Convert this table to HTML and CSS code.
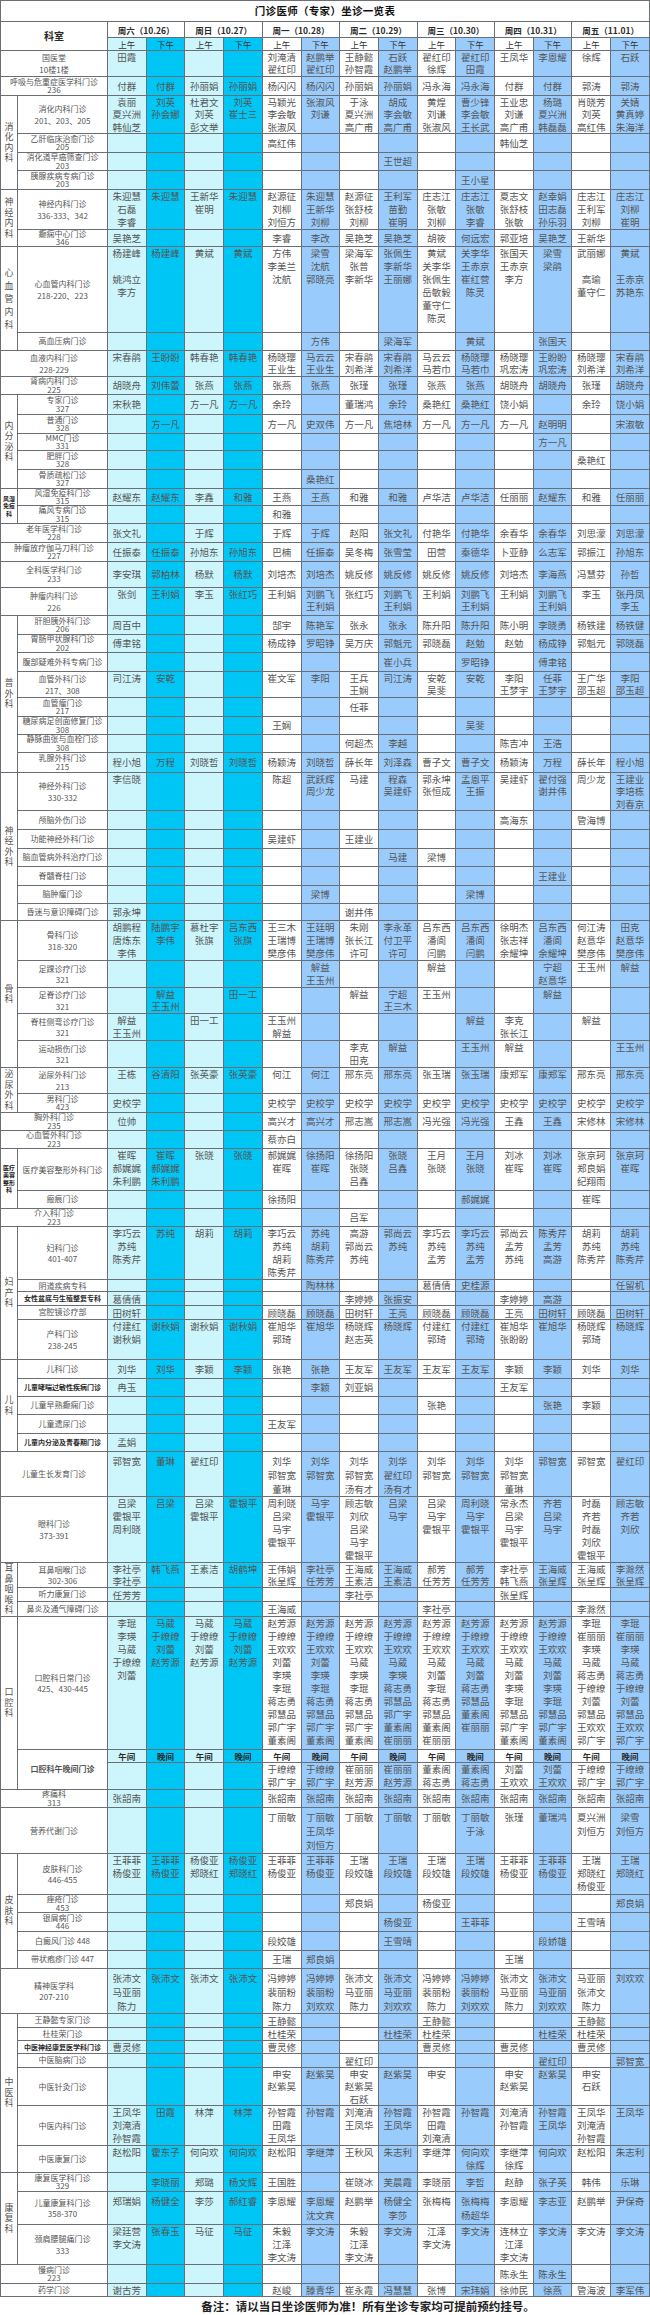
FILE: index.html
```html
<!DOCTYPE html>
<html lang="zh-CN">
<head>
<meta charset="utf-8">
<title>门诊医师（专家）坐诊一览表</title>
<link rel="stylesheet" href="styles.css">
</head>
<body>
<table class="sch">
<colgroup><col class="cg"><col class="cc"><col class="wa"><col class="wp"><col class="wa"><col class="wp"><col class="da"><col class="dp"><col class="da"><col class="dp"><col class="da"><col class="dp"><col class="da"><col class="dp"><col class="da"><col class="dp"></colgroup>
<tbody>
<tr class="h21"><td class="title" colspan="16">门诊医师（专家）坐诊一览表</td></tr>
<tr class="h16 dh"><td class="ks" colspan="2" rowspan="2">科室</td><td colspan="2">周六（10.26）</td><td colspan="2">周日（10.27）</td><td colspan="2">周一（10.28）</td><td colspan="2">周二（10.29）</td><td colspan="2">周三（10.30）</td><td colspan="2">周四（10.31）</td><td colspan="2">周五（11.01）</td></tr>
<tr class="h13 ap"><td>上午</td><td>下午</td><td>上午</td><td>下午</td><td>上午</td><td>下午</td><td>上午</td><td>下午</td><td>上午</td><td>下午</td><td>上午</td><td>下午</td><td>上午</td><td>下午</td></tr>

<tr class="h26 ml"><td class="cn" colspan="2"><div>国医堂<br>10楼1楼</div></td><td>田霞</td><td></td><td></td><td></td><td>刘淹清<br>翟红印</td><td>赵鹏举<br>翟红印</td><td>王静懿<br>孙智霞</td><td>石跃<br>赵鹏举</td><td>翟红印<br>徐辉</td><td>翟红印<br>田霞</td><td>王凤华</td><td>李恩耀</td><td>徐辉</td><td>石跃</td></tr>
<tr class="h19"><td class="cn" colspan="2"><div>呼吸与危重症医学科门诊<br>236</div></td><td>付群</td><td>付群</td><td>孙丽娟</td><td>孙丽娟</td><td>杨闪闪</td><td>杨闪闪</td><td>孙丽娟</td><td>孙丽娟</td><td>冯永海</td><td>冯永海</td><td>付群</td><td>付群</td><td>郭涛</td><td>郭涛</td></tr>

<tr class="h38 ml"><td class="g" rowspan="4">消化内科</td><td class="cn"><div>消化内科门诊<br>201、203、205</div></td><td>袁丽<br>夏兴洲<br>韩仙芝</td><td>刘英<br>孙会娜</td><td>杜君文<br>刘英<br>彭文举</td><td>刘英<br>崔士三</td><td>马颖光<br>李会敏<br>张淑风</td><td>张淑风<br>刘谦</td><td>于泳<br>夏兴洲<br>高广甫</td><td>胡成<br>李会敏<br>高广甫</td><td>黄煌<br>刘谦<br>张淑风</td><td>曹少锋<br>李会敏<br>王长武</td><td>王业忠<br>刘谦<br>高广甫</td><td>杨璐<br>夏兴洲<br>韩磊磊</td><td>肖晓芳<br>刘英<br>高红伟</td><td>关婧<br>黄真婷<br>朱海洋</td></tr>
<tr class="h19"><td class="cn"><div>乙肝临床治愈门诊<br>205</div></td><td></td><td></td><td></td><td></td><td>高红伟</td><td></td><td></td><td></td><td></td><td></td><td>韩仙芝</td><td></td><td></td><td></td></tr>
<tr class="h18"><td class="cn"><div>消化道早癌筛查门诊<br>203</div></td><td></td><td></td><td></td><td></td><td></td><td></td><td></td><td>王世超</td><td></td><td></td><td></td><td></td><td></td><td></td></tr>
<tr class="h19"><td class="cn"><div>胰腺疾病专病门诊<br>203</div></td><td></td><td></td><td></td><td></td><td></td><td></td><td></td><td></td><td></td><td>王小星</td><td></td><td></td><td></td><td></td></tr>

<tr class="h40 ml l13"><td class="g" rowspan="2">神经内科</td><td class="cn"><div>神经内科门诊<br>336-333、342</div></td><td>朱迎慧<br>石磊<br>李睿</td><td>朱迎慧</td><td>王新华<br>崔明</td><td>朱迎慧</td><td>赵源征<br>刘柳<br>刘恒方</td><td>朱迎慧<br>王新华<br>刘柳</td><td>赵源征<br>张舒枝<br>刘柳</td><td>王利军<br>苗勤<br>崔明</td><td>庄志江<br>张敏<br>刘柳</td><td>庄志江<br>张敏<br>李睿</td><td>夏志文<br>张舒枝<br>张敏</td><td>赵幸娟<br>田志磊<br>孙乐羽</td><td>庄志江<br>王利军<br>刘柳</td><td>庄志江<br>刘柳<br>崔明</td></tr>
<tr class="h17"><td class="cn"><div>癫痫中心门诊<br>346</div></td><td>吴艳芝</td><td></td><td></td><td></td><td>李睿</td><td>李改</td><td>吴艳芝</td><td>吴艳芝</td><td>胡筱</td><td>何远宏</td><td>郭亚培</td><td>吴艳芝</td><td>王新华</td><td></td></tr>

<tr class="h86 ml l13"><td class="g gl" rowspan="2">心血管内科</td><td class="cn"><div>心血管内科门诊<br>218-220、223</div></td><td>杨建峰<br><br>姚鸿立<br>李方</td><td>杨建峰</td><td>黄斌</td><td>黄斌</td><td>方伟<br>李美兰<br>沈航</td><td>梁雪<br>沈航<br>郭晓亮</td><td>梁海军<br>张普<br>李新华</td><td>张佩生<br>李新华<br>王丽娜</td><td>黄斌<br>关李华<br>张佩生<br>岳敏毅<br>董守仁<br>陈灵</td><td>关李华<br>王赤京<br>崔红营<br>陈灵</td><td>张国天<br>王赤京<br>李方</td><td>梁雪<br>梁鹃</td><td>武丽娜<br><br>高瑜<br>董守仁</td><td>黄斌<br><br>王赤京<br>苏艳东</td></tr>
<tr class="h18"><td class="cn"><div>高血压病门诊</div></td><td></td><td></td><td></td><td></td><td></td><td>方伟</td><td></td><td>梁海军</td><td></td><td>黄斌</td><td></td><td>张国天</td><td></td><td></td></tr>

<tr class="h26 ml"><td class="cn" colspan="2"><div>血液内科门诊<br>228-229</div></td><td>宋春鹃</td><td>王盼盼</td><td>韩春艳</td><td>韩春艳</td><td>杨晓璎<br>王业生</td><td>马云云<br>王业生</td><td>宋春鹃<br>刘希洋</td><td>宋春鹃<br>刘希洋</td><td>马云云<br>马若巾</td><td>杨晓璎<br>马若巾</td><td>杨晓璎<br>巩宏涛</td><td>王盼盼<br>巩宏涛</td><td>杨晓璎<br>刘希洋</td><td>宋春鹃<br>刘希洋</td></tr>
<tr class="h18"><td class="cn" colspan="2"><div>肾病内科门诊<br>225</div></td><td>胡晓舟</td><td>刘伟蕾</td><td>张燕</td><td>张燕</td><td>张燕</td><td>张燕</td><td>张瑾</td><td>张瑾</td><td>张燕</td><td>张燕</td><td>胡晓舟</td><td>胡晓舟</td><td>张瑾</td><td>胡晓舟</td></tr>

<tr class="h20"><td class="g" rowspan="5">内分泌科</td><td class="cn"><div>专家门诊<br>327</div></td><td>宋秋艳</td><td></td><td>方一凡</td><td>方一凡</td><td>余玲</td><td></td><td>董瑞鸿</td><td>余玲</td><td>桑艳红</td><td>桑艳红</td><td>饶小娟</td><td></td><td>余玲</td><td>饶小娟</td></tr>
<tr class="h19"><td class="cn"><div>普通门诊<br>328</div></td><td></td><td>方一凡</td><td></td><td></td><td>方一凡</td><td>史双伟</td><td>方一凡</td><td>焦培林</td><td>方一凡</td><td>方一凡</td><td>方一凡</td><td>赵明明</td><td></td><td>宋淑敏</td></tr>
<tr class="h17"><td class="cn"><div>MMC门诊<br>331</div></td><td></td><td></td><td></td><td></td><td></td><td></td><td></td><td></td><td></td><td></td><td></td><td>方一凡</td><td></td><td></td></tr>
<tr class="h19"><td class="cn"><div>肥胖门诊<br>328</div></td><td></td><td></td><td></td><td></td><td></td><td></td><td></td><td></td><td></td><td></td><td></td><td></td><td>桑艳红</td><td></td></tr>
<tr class="h19"><td class="cn"><div>骨质疏松门诊<br>327</div></td><td></td><td></td><td></td><td></td><td></td><td>桑艳红</td><td></td><td></td><td></td><td></td><td></td><td></td><td></td><td></td></tr>

<tr class="h17"><td class="g gs" rowspan="2">风湿免疫科</td><td class="cn"><div>风湿免疫科门诊<br>315</div></td><td>赵耀东</td><td>赵耀东</td><td>李鑫</td><td>和雅</td><td>王燕</td><td>王燕</td><td>和雅</td><td>和雅</td><td>卢华洁</td><td>卢华洁</td><td>任丽丽</td><td>赵耀东</td><td>和雅</td><td>任丽丽</td></tr>
<tr class="h18"><td class="cn"><div>痛风专病门诊<br>315</div></td><td></td><td></td><td></td><td></td><td>和雅</td><td></td><td></td><td></td><td></td><td></td><td></td><td></td><td></td><td></td></tr>

<tr class="h19"><td class="cn" colspan="2"><div>老年医学科门诊<br>228</div></td><td>张文礼</td><td></td><td>于辉</td><td></td><td>于辉</td><td>于辉</td><td>赵阳</td><td>张文礼</td><td>付艳华</td><td>付艳华</td><td>余春华</td><td>余春华</td><td>刘思濛</td><td>刘思濛</td></tr>
<tr class="h19"><td class="cn" colspan="2"><div>肿瘤放疗伽马刀科门诊<br>227</div></td><td>任振泰</td><td>任振泰</td><td>孙旭东</td><td>孙旭东</td><td>巴楠</td><td>任振泰</td><td>吴冬梅</td><td>张雪莹</td><td>田营</td><td>秦德华</td><td>卜亚静</td><td>么志军</td><td>郭振江</td><td>孙旭东</td></tr>
<tr class="h26"><td class="cn" colspan="2"><div>全科医学科门诊<br>233</div></td><td>李安琪</td><td>郭柏林</td><td>杨默</td><td>杨默</td><td>刘培杰</td><td>刘培杰</td><td>姚反修</td><td>姚反修</td><td>姚反修</td><td>姚反修</td><td>刘培杰</td><td>李海燕</td><td>冯慧芬</td><td>孙哲</td></tr>
<tr class="h28 ml"><td class="cn" colspan="2"><div>肿瘤内科门诊<br>226</div></td><td>张剑</td><td>王利娟</td><td>李玉</td><td>张红巧</td><td>王利娟</td><td>刘鹏飞<br>王利娟</td><td>张红巧</td><td>刘鹏飞<br>王利娟</td><td>王利娟</td><td>刘鹏飞<br>王利娟</td><td>王利娟</td><td>刘鹏飞<br>王利娟</td><td>李玉</td><td>张丹凤<br>李玉</td></tr>

<tr class="h19"><td class="g" rowspan="8">普外科</td><td class="cn"><div>肝胆胰外科门诊<br>206</div></td><td>周百中</td><td></td><td></td><td></td><td>郜宇</td><td>陈艳军</td><td>张永</td><td>张永</td><td>陈升阳</td><td>陈升阳</td><td>陈小明</td><td>李晓勇</td><td>杨铁建</td><td>杨铁健</td></tr>
<tr class="h18"><td class="cn"><div>胃肠甲状腺科门诊<br>202</div></td><td>傅聿铭</td><td></td><td></td><td></td><td>杨成铮</td><td>罗昭铮</td><td>吴万庆</td><td>郭魁元</td><td>郭晓磊</td><td>赵勉</td><td>赵勉</td><td>杨成铮</td><td>郭魁元</td><td>郭晓磊</td></tr>
<tr class="h19"><td class="cn"><div>腹部疑难外科专病门诊</div></td><td></td><td></td><td></td><td></td><td></td><td></td><td></td><td>崔小兵</td><td></td><td>罗昭铮</td><td></td><td>傅聿铭</td><td></td><td></td></tr>
<tr class="h26 ml"><td class="cn"><div>血管外科门诊<br>217、308</div></td><td>司江涛</td><td>安乾</td><td></td><td></td><td>崔文军</td><td>李阳</td><td>王兵<br>王娴</td><td>司江涛</td><td>安乾<br>吴斐</td><td>安乾</td><td>李阳<br>王梦宇</td><td>任菲<br>王梦宇</td><td>王广华<br>邵玉超</td><td>李阳<br>邵玉超</td></tr>
<tr class="h19"><td class="cn"><div>血管瘤门诊<br>217</div></td><td></td><td></td><td></td><td></td><td></td><td></td><td>任菲</td><td></td><td></td><td></td><td></td><td></td><td></td><td></td></tr>
<tr class="h18"><td class="cn"><div>糖尿病足创面修复门诊<br>308</div></td><td></td><td></td><td></td><td></td><td>王娴</td><td></td><td></td><td></td><td></td><td>吴斐</td><td></td><td></td><td></td><td></td></tr>
<tr class="h18"><td class="cn"><div>静脉曲张与血栓门诊<br>308</div></td><td></td><td></td><td></td><td></td><td></td><td></td><td>何超杰</td><td>李越</td><td></td><td></td><td>陈吉冲</td><td>王浩</td><td></td><td></td></tr>
<tr class="h20"><td class="cn"><div>乳腺外科门诊<br>215</div></td><td>程小旭</td><td>万程</td><td>刘晓哲</td><td>刘晓哲</td><td>杨颖涛</td><td>刘晓哲</td><td>薛长年</td><td>刘泽森</td><td>曹子文</td><td>曹子文</td><td>杨颖涛</td><td>万程</td><td>薛长年</td><td>程小旭</td></tr>

<tr class="h38 ml"><td class="g" rowspan="7">神经外科</td><td class="cn"><div>神经外科门诊<br>330-332</div></td><td>李信晓</td><td></td><td></td><td></td><td>陈超</td><td>武跃辉<br>周少龙</td><td>马建</td><td>程森<br>吴建虾</td><td>郭永坤<br>张恒成</td><td>孟恩平<br>王振</td><td>吴建虾</td><td>翟付强<br>谢井伟</td><td>周少龙</td><td>王建业<br>李培栋<br>刘春京</td></tr>
<tr class="h19"><td class="cn"><div>颅脑外伤门诊</div></td><td></td><td></td><td></td><td></td><td></td><td></td><td></td><td></td><td></td><td></td><td>高海东</td><td></td><td>管海博</td><td></td></tr>
<tr class="h19"><td class="cn"><div>功能神经外科门诊</div></td><td></td><td></td><td></td><td></td><td>吴建虾</td><td></td><td>王建业</td><td></td><td></td><td></td><td></td><td></td><td></td><td></td></tr>
<tr class="h18"><td class="cn"><div>脑血管病外科治疗门诊</div></td><td></td><td></td><td></td><td></td><td></td><td></td><td></td><td>马建</td><td>梁博</td><td></td><td></td><td></td><td></td><td></td></tr>
<tr class="h19"><td class="cn"><div>脊髓脊柱门诊</div></td><td></td><td></td><td></td><td></td><td></td><td></td><td></td><td></td><td></td><td></td><td></td><td>王建业</td><td></td><td></td></tr>
<tr class="h18"><td class="cn"><div>脑肿瘤门诊</div></td><td></td><td></td><td></td><td></td><td></td><td>梁博</td><td></td><td></td><td></td><td>梁博</td><td></td><td></td><td></td><td></td></tr>
<tr class="h17"><td class="cn"><div>昏迷与意识障碍门诊</div></td><td>郭永坤</td><td></td><td></td><td></td><td></td><td></td><td>谢井伟</td><td></td><td></td><td></td><td></td><td></td><td></td><td></td></tr>

<tr class="h40 ml l13"><td class="g" rowspan="5">骨科</td><td class="cn"><div>骨科门诊<br>318-320</div></td><td>胡鹏程<br>唐炼东<br>李伟</td><td>陆鹏宇<br>李伟</td><td>慕杜宇<br>张旗</td><td>吕东西<br>张旗</td><td>王三木<br>王瑞博<br>樊彦伟</td><td>王廷明<br>王瑞博<br>樊彦伟</td><td>朱刚<br>张长江<br>许可</td><td>李永革<br>付卫平<br>许可</td><td>吕东西<br>潘阆<br>闫鹏</td><td>吕东西<br>潘阆<br>闫鹏</td><td>徐明杰<br>张志祥<br>余耀坤</td><td>吕东西<br>潘阆<br>余耀坤</td><td>何江涛<br>赵意华<br>樊彦伟</td><td>田克<br>赵意华<br>樊彦伟</td></tr>
<tr class="h27 ml l13"><td class="cn"><div>足踝诊疗门诊<br>321</div></td><td></td><td></td><td></td><td></td><td></td><td>解益<br>王玉州</td><td></td><td></td><td>解益</td><td></td><td></td><td>宁超<br>赵意华</td><td>王玉州</td><td>解益</td></tr>
<tr class="h26 ml"><td class="cn"><div>足脊诊疗门诊<br>321</div></td><td></td><td>解益<br>王玉州</td><td></td><td>田一工</td><td></td><td></td><td>解益</td><td>宁超<br>王三木</td><td>王玉州</td><td></td><td></td><td>解益</td><td></td><td></td></tr>
<tr class="h27 ml l13"><td class="cn"><div>脊柱侧弯诊疗门诊<br>321</div></td><td>解益<br>王玉州</td><td></td><td>田一工</td><td></td><td>王玉州<br>解益</td><td></td><td></td><td></td><td></td><td>解益</td><td>李克<br>张长江</td><td></td><td>解益</td><td></td></tr>
<tr class="h27 ml l13"><td class="cn"><div>运动损伤门诊<br>321</div></td><td></td><td></td><td></td><td></td><td></td><td></td><td>李克<br>田克</td><td>解益</td><td></td><td>王玉州</td><td>解益</td><td></td><td></td><td>王玉州</td></tr>

<tr class="h26 ml"><td class="g" rowspan="2">泌尿外科</td><td class="cn"><div>泌尿外科门诊<br>213</div></td><td>王栋</td><td>谷清阳</td><td>张英豪</td><td>张英豪</td><td>何江</td><td>何江</td><td>邢东亮</td><td>邢东亮</td><td>张玉瑞</td><td>张玉瑞</td><td>康郑军</td><td>康郑军</td><td>邢东亮</td><td>邢东亮</td></tr>
<tr class="h19"><td class="cn"><div>男科门诊<br>423</div></td><td>史校学</td><td></td><td></td><td></td><td>史校学</td><td>史校学</td><td>史校学</td><td>史校学</td><td>史校学</td><td>史校学</td><td>史校学</td><td>史校学</td><td>史校学</td><td>史校学</td></tr>

<tr class="h18"><td class="cn" colspan="2"><div>胸外科门诊<br>235</div></td><td>位帅</td><td></td><td></td><td></td><td>高兴才</td><td>高兴才</td><td>邢志嵩</td><td>邢志嵩</td><td>冯光强</td><td>冯光强</td><td>王鑫</td><td>王鑫</td><td>宋修林</td><td>宋修林</td></tr>
<tr class="h18"><td class="cn" colspan="2"><div>心血管外科门诊<br>223</div></td><td></td><td></td><td></td><td></td><td>蔡亦白</td><td></td><td></td><td></td><td></td><td></td><td></td><td></td><td></td><td></td></tr>

<tr class="h42 ml l13"><td class="g gs" rowspan="2">医疗美容整形科</td><td class="cn"><div>医疗美容整形外科门诊</div></td><td>崔晖<br>郝娓娓<br>朱利鹏</td><td>崔晖<br>郝娓娓<br>朱利鹏</td><td>张晓</td><td>张晓</td><td>郝娓娓<br>崔晖</td><td>徐扬阳<br>崔晖</td><td>徐扬阳<br>张晓<br>吕鑫</td><td>张晓<br>吕鑫</td><td>王月<br>张晓</td><td>王月<br>张晓</td><td>刘冰<br>崔晖</td><td>刘冰<br>崔晖</td><td>张京珂<br>郑良娟<br>纪翔雨</td><td>张京珂<br>崔晖</td></tr>
<tr class="h18"><td class="cn"><div>瘢痕门诊</div></td><td></td><td></td><td></td><td></td><td>徐扬阳</td><td></td><td></td><td></td><td></td><td>郝娓娓</td><td></td><td></td><td>崔晖</td><td></td></tr>

<tr class="h18"><td class="cn" colspan="2"><div>介入科门诊<br>223</div></td><td></td><td></td><td></td><td></td><td></td><td></td><td>吕军</td><td></td><td></td><td></td><td></td><td></td><td></td><td></td></tr>

<tr class="h53 ml l13"><td class="g" rowspan="5">妇产科</td><td class="cn"><div>妇科门诊<br>401-407</div></td><td>李巧云<br>苏纯<br>陈秀芹</td><td>苏纯</td><td>胡莉</td><td>胡莉</td><td>李巧云<br>苏纯<br>胡莉<br>陈秀芹</td><td>苏纯<br>胡莉<br>陈秀芹</td><td>高游<br>郭尚云<br>苏纯</td><td>郭尚云<br>苏纯</td><td>李巧云<br>苏纯<br>孟芳</td><td>李巧云<br>苏纯<br>孟芳</td><td>郭尚云<br>孟芳<br>苏纯</td><td>陈秀芹<br>孟芳<br>高游</td><td>胡莉<br>苏纯<br>陈秀芹</td><td>胡莉<br>苏纯<br>陈秀芹</td></tr>
<tr class="h12"><td class="cn"><div>阴道疾病专科</div></td><td></td><td></td><td></td><td></td><td></td><td>陶林林</td><td></td><td></td><td>葛倩倩</td><td>史桂源</td><td></td><td></td><td></td><td>任留机</td></tr>
<tr class="h14"><td class="cn cb"><div>女性盆底与生殖整复专科</div></td><td>葛倩倩</td><td></td><td></td><td></td><td></td><td></td><td>李婷婷</td><td>张振安</td><td></td><td></td><td>李婷婷</td><td>高游</td><td></td><td></td></tr>
<tr class="h14"><td class="cn"><div>宫腔镜诊疗部</div></td><td>田树轩</td><td></td><td></td><td></td><td>顾晓磊</td><td>顾晓磊</td><td>田树轩</td><td>王亮</td><td>顾晓磊</td><td>顾晓磊</td><td>王亮</td><td>田树轩</td><td>顾晓磊</td><td>田树轩</td></tr>
<tr class="h40 ml l13"><td class="cn"><div>产科门诊<br>238-245</div></td><td>付建红<br>谢秋娟</td><td>谢秋娟</td><td>谢秋娟</td><td>谢秋娟</td><td>崔旭华<br>郭琦</td><td>崔旭华</td><td>杨晓辉<br>赵志英</td><td>杨晓辉</td><td>付建红<br>郭琦</td><td>付建红<br>郭琦</td><td>崔旭华<br>张盼盼</td><td>崔旭华</td><td>杨晓辉<br>郭琦</td><td>杨晓辉</td></tr>

<tr class="h19"><td class="g" rowspan="5">儿科</td><td class="cn"><div>儿科门诊</div></td><td>刘华</td><td>刘华</td><td>李颖</td><td>李颖</td><td>张艳</td><td>张艳</td><td>王友军</td><td>王友军</td><td>王友军</td><td>王友军</td><td>李颖</td><td>李颖</td><td>刘华</td><td>刘华</td></tr>
<tr class="h18"><td class="cn cb"><div>儿童哮喘过敏性疾病门诊</div></td><td>冉玉</td><td></td><td></td><td></td><td></td><td>李颖</td><td>刘亚娟</td><td></td><td></td><td></td><td>王友军</td><td></td><td></td><td></td></tr>
<tr class="h18"><td class="cn"><div>儿童早熟癫痫门诊</div></td><td></td><td></td><td></td><td></td><td></td><td></td><td></td><td></td><td>张艳</td><td></td><td></td><td>张艳</td><td>李颖</td><td></td></tr>
<tr class="h19"><td class="cn"><div>儿童遗尿门诊</div></td><td></td><td></td><td></td><td></td><td>王友军</td><td></td><td></td><td></td><td></td><td></td><td></td><td></td><td></td><td></td></tr>
<tr class="h18"><td class="cn cb"><div>儿童内分泌及青春期门诊</div></td><td>孟娟</td><td></td><td></td><td></td><td></td><td></td><td></td><td></td><td></td><td></td><td></td><td></td><td></td><td></td></tr>

<tr class="h45 ml l14"><td class="cn" colspan="2"><div>儿童生长发育门诊</div></td><td>郭智宽</td><td>董琳</td><td>翟红印</td><td></td><td>刘华<br>郭智宽<br>董琳</td><td>刘华<br>郭智宽</td><td>刘华<br>郭智宽<br>汤有才</td><td>刘华<br>翟红印<br>汤有才</td><td>刘华<br>郭智宽</td><td>刘华<br>郭智宽</td><td>刘华<br>郭智宽<br>董琳</td><td>郭智宽</td><td>郭智宽</td><td>翟红印</td></tr>
<tr class="h66 ml l13"><td class="cn" colspan="2"><div>眼科门诊<br>373-391</div></td><td>吕梁<br>霍银平<br>周利晓</td><td>吕梁</td><td>吕梁<br>霍银平</td><td>霍银平</td><td>周利晓<br>吕梁<br>马宇<br>霍银平</td><td>马宇<br>霍银平</td><td>顾志敏<br>刘欣<br>吕梁<br>马宇<br>霍银平</td><td>吕梁<br>马宇</td><td>吕梁<br>马宇<br>霍银平</td><td>周利晓<br>马宇<br>霍银平</td><td>常永杰<br>吕梁<br>马宇<br>霍银平</td><td>齐若<br>吕梁<br>马宇</td><td>时磊<br>齐若<br>时磊<br>刘欣<br>霍银平</td><td>顾志敏<br>齐若<br>刘欣</td></tr>

<tr class="h25 ml l12"><td class="g" rowspan="3">耳鼻咽喉科</td><td class="cn"><div>耳鼻咽喉门诊<br>302-306</div></td><td>李社亭<br>李社亭</td><td>韩飞燕</td><td>王素洁</td><td>胡鹤坤</td><td>王伟娟<br>张呈辉</td><td>李社亭<br>任芳芳</td><td>王海威<br>王素洁</td><td>王海威<br>王素洁</td><td>郝芳<br>任芳芳</td><td>郝芳<br>任芳芳</td><td>李社亭<br>韩飞燕</td><td>王海威<br>张呈辉</td><td>王海威<br>张呈辉</td><td>李滁然<br>张呈辉</td></tr>
<tr class="h14"><td class="cn"><div>听力康复门诊</div></td><td>任芳芳</td><td></td><td></td><td></td><td></td><td></td><td>李社亭</td><td></td><td></td><td></td><td>张呈辉</td><td></td><td></td><td></td></tr>
<tr class="h15"><td class="cn"><div>鼻炎及通气障碍门诊</div></td><td></td><td></td><td></td><td></td><td>王海威</td><td></td><td></td><td></td><td>李社亭</td><td></td><td></td><td></td><td>李滁然</td><td></td></tr>

<tr class="h133 ml l13"><td class="g" rowspan="3">口腔科</td><td class="cn"><div>口腔科日常门诊<br>425、430-445</div></td><td>李琨<br>李瑛<br>马葳<br>于缭缭<br>刘蕾</td><td>马葳<br>于缭缭<br>刘蕾<br>赵芳源</td><td>马葳<br>于缭缭<br>刘蕾<br>赵芳源</td><td>马葳<br>于缭缭<br>刘蕾<br>赵芳源</td><td>赵芳源<br>于缭缭<br>王欢欢<br>刘蕾<br>李瑛<br>李琨<br>蒋志勇<br>郭慧品<br>郭广宇<br>董素阁</td><td>赵芳源<br>于缭缭<br>王欢欢<br>刘蕾<br>李瑛<br>李琨<br>蒋志勇<br>郭慧品<br>郭广宇<br>董素阁</td><td>赵芳源<br>于缭缭<br>王欢欢<br>马葳<br>李瑛<br>李琨<br>蒋志勇<br>郭慧品<br>郭广宇<br>董素阁</td><td>赵芳源<br>于缭缭<br>王欢欢<br>马葳<br>李瑛<br>蒋志勇<br>郭慧品<br>郭广宇<br>董素阁<br>崔丽丽</td><td>赵芳源<br>于缭缭<br>王欢欢<br>马葳<br>刘蕾<br>李琨<br>蒋志勇<br>郭慧品<br>董素阁<br>崔丽丽</td><td>赵芳源<br>于缭缭<br>王欢欢<br>马葳<br>刘蕾<br>蒋志勇<br>郭慧品<br>董素阁<br>崔丽丽</td><td>赵芳源<br>于缭缭<br>王欢欢<br>马葳<br>刘蕾<br>李瑛<br>李琨<br>郭慧品<br>郭广宇<br>董素阁</td><td>赵芳源<br>于缭缭<br>王欢欢<br>马葳<br>刘蕾<br>李瑛<br>李琨<br>郭慧品<br>郭广宇<br>董素阁</td><td>李琨<br>崔丽丽<br>李瑛<br>马葳<br>蒋志勇<br>于缭缭<br>刘蕾<br>郭慧品<br>王欢欢<br>郭广宇</td><td>李琨<br>崔丽丽<br>李瑛<br>马葳<br>蒋志勇<br>于缭缭<br>刘蕾<br>郭慧品<br>王欢欢<br>郭广宇</td></tr>
<tr class="h13 wh"><td class="cn" rowspan="2"><div>口腔科午晚间门诊</div></td><td>午间</td><td>晚间</td><td>午间</td><td>晚间</td><td>午间</td><td>晚间</td><td>午间</td><td>晚间</td><td>午间</td><td>晚间</td><td>午间</td><td>晚间</td><td>午间</td><td>晚间</td></tr>
<tr class="h27 ml l13"><td></td><td></td><td></td><td></td><td>于缭缭<br>郭广宇</td><td>于缭缭<br>郭广宇</td><td>崔丽丽<br>赵芳源</td><td>崔丽丽<br>赵芳源</td><td>董素阁<br>蒋志勇</td><td>董素阁<br>蒋志勇</td><td>刘蕾<br>王欢欢</td><td>刘蕾<br>王欢欢</td><td>于缭缭<br>郭广宇</td><td>于缭缭<br>郭广宇</td></tr>

<tr class="h18"><td class="cn" colspan="2"><div>疼痛科<br>313</div></td><td>张韶南</td><td></td><td></td><td></td><td>张韶南</td><td>张韶南</td><td>张韶南</td><td>张韶南</td><td>张韶南</td><td>张韶南</td><td>张韶南</td><td>张韶南</td><td>张韶南</td><td>张韶南</td></tr>
<tr class="h46 ml l15"><td class="cn" colspan="2"><div>营养代谢门诊</div></td><td></td><td></td><td></td><td></td><td>丁丽敏</td><td>丁丽敏<br>王凤华<br>刘恒方</td><td>丁丽敏</td><td>丁丽敏</td><td>丁丽敏</td><td>丁丽敏<br>于泳</td><td>张瑾</td><td>董瑞鸿</td><td>夏兴洲<br>刘恒方</td><td>梁雪<br>刘恒方</td></tr>

<tr class="h41 ml l13"><td class="g" rowspan="5">皮肤科</td><td class="cn"><div>皮肤科门诊<br>446-455</div></td><td>王菲菲<br>杨俊亚</td><td>王菲菲<br>杨俊亚</td><td>杨俊亚<br>郑晓红</td><td>杨俊亚<br>郑晓红</td><td>王菲菲<br>杨俊亚</td><td>王菲菲<br>杨俊亚</td><td>王瑞<br>段姣雄</td><td>王瑞<br>段姣雄</td><td>王瑞<br>段姣雄</td><td>王瑞<br>段姣雄</td><td>王菲菲<br>杨俊亚</td><td>王菲菲<br>杨俊亚</td><td>王瑞<br>郑晓红<br>杨俊亚</td><td>王瑞<br>郑晓红</td></tr>
<tr class="h18"><td class="cn"><div>痤疮门诊<br>453</div></td><td></td><td></td><td></td><td></td><td></td><td></td><td>郑良娟</td><td></td><td>杨俊亚</td><td></td><td></td><td></td><td></td><td>郑良娟</td></tr>
<tr class="h19"><td class="cn"><div>银屑病门诊<br>446</div></td><td></td><td></td><td></td><td></td><td></td><td></td><td></td><td>杨俊亚</td><td></td><td>王菲菲</td><td></td><td></td><td>王雪晴</td><td></td></tr>
<tr class="h19"><td class="cn"><div>白癜风门诊 448</div></td><td></td><td></td><td></td><td></td><td>段姣雄</td><td></td><td></td><td>王雪晴</td><td></td><td></td><td></td><td>段娇雄</td><td></td><td></td></tr>
<tr class="h18"><td class="cn"><div>带状疱疹门诊 447</div></td><td></td><td></td><td></td><td></td><td>王瑞</td><td>郑良娟</td><td></td><td></td><td></td><td></td><td>王瑞</td><td></td><td></td><td></td></tr>

<tr class="h45 ml l14"><td class="cn" colspan="2"><div>精神医学科<br>207-210</div></td><td>张沛文<br>马亚丽<br>陈力</td><td>张沛文</td><td>张沛文</td><td>张沛文</td><td>冯婷婷<br>裴丽粉<br>陈力</td><td>冯婷婷<br>裴丽粉<br>刘欢欢</td><td>张沛文<br>马亚丽<br>陈力</td><td>张沛文<br>马亚丽<br>刘欢欢</td><td>冯婷婷<br>裴丽粉<br>陈力</td><td>冯婷婷<br>裴丽粉<br>刘欢欢</td><td>张沛文<br>马亚丽<br>陈力</td><td>张沛文<br>马亚丽<br>刘欢欢</td><td>马亚丽<br>张沛文<br>陈力</td><td>刘欢欢</td></tr>

<tr class="h14"><td class="g" rowspan="7">中医科</td><td class="cn"><div>王静懿专家门诊</div></td><td></td><td></td><td></td><td></td><td>王静懿</td><td></td><td></td><td></td><td>王静懿</td><td></td><td></td><td></td><td>王静懿</td><td></td></tr>
<tr class="h13"><td class="cn"><div>杜桂荣门诊</div></td><td></td><td></td><td></td><td></td><td>杜桂荣</td><td></td><td></td><td>杜桂荣</td><td>杜桂荣</td><td></td><td></td><td>杜桂荣</td><td>杜桂荣</td><td></td></tr>
<tr class="h13"><td class="cn cb"><div>中医神经康复医学科门诊</div></td><td>曹灵修</td><td></td><td></td><td></td><td>曹灵修</td><td></td><td></td><td></td><td>曹灵修</td><td></td><td>曹灵修</td><td></td><td>曹灵修</td><td></td></tr>
<tr class="h14"><td class="cn"><div>中医脑病门诊</div></td><td></td><td></td><td></td><td></td><td></td><td></td><td>翟红印</td><td></td><td></td><td></td><td></td><td>翟红印</td><td></td><td>郭智宽</td></tr>
<tr class="h38 ml"><td class="cn"><div>中医针灸门诊</div></td><td></td><td></td><td></td><td></td><td>申安<br>赵紫昊</td><td>赵紫昊</td><td>申安<br>赵紫昊<br>石跃</td><td>赵紫昊</td><td>申安</td><td></td><td>申安<br>赵紫昊</td><td>赵紫昊</td><td>申安<br>石跃</td><td></td></tr>
<tr class="h40 ml l13"><td class="cn"><div>中医内科门诊</div></td><td>王凤华<br>刘淹清<br>孙智霞</td><td>田霞</td><td>林萍</td><td>林萍</td><td>孙智霞<br>田霞<br>王凤华</td><td>孙智霞</td><td>刘淹清<br>王凤华</td><td>孙智霞<br>王凤华</td><td>孙智霞<br>田霞<br>刘淹清</td><td>孙智霞</td><td>刘淹清<br>孙智霞</td><td>孙智霞<br>王凤华</td><td>王凤华<br>刘淹清<br>孙智霞</td><td>王凤华</td></tr>
<tr class="h27 ml l13"><td class="cn"><div>中医康复门诊</div></td><td>赵松阳</td><td>霍东子</td><td>何向欢</td><td>何向欢</td><td>赵松阳</td><td>李继萍</td><td>王秋风</td><td>朱志利</td><td>李继萍</td><td>何向欢<br>徐辉</td><td>李继萍<br>徐辉</td><td>何向欢</td><td>赵松阳</td><td>朱志利</td></tr>

<tr class="h19"><td class="g" rowspan="3">康复科</td><td class="cn"><div>康复医学科门诊<br>329</div></td><td></td><td>李晓丽</td><td>郑璐</td><td>杨文辉</td><td>王国胜</td><td></td><td>崔晓冰</td><td>芙晨霞</td><td>李晓丽</td><td>李哲</td><td>赵静</td><td>张子英</td><td>韩伟</td><td>乐琳</td></tr>
<tr class="h33 ml l15"><td class="cn"><div>儿童康复科门诊<br>358-370</div></td><td>郑瑞娟</td><td>杨健全</td><td>李莎</td><td>郝红睿</td><td>李恩耀</td><td>李恩耀<br>沈文宾</td><td>赵鹏举</td><td>杨健全<br>李莎</td><td>张梅梅</td><td>张梅梅<br>杨超华</td><td>李恩耀</td><td>李志亚</td><td>赵鹏举</td><td>尹保奇</td></tr>
<tr class="h40 ml l13"><td class="cn"><div>颈肩腰腿痛门诊<br>333</div></td><td>梁廷营<br>李文涛</td><td>张春玉</td><td>马征</td><td>马征</td><td>朱毅<br>江泽<br>李文涛</td><td>李文涛</td><td>朱毅<br>江泽<br>李文涛</td><td>李文涛</td><td>江泽<br>李文涛</td><td>李文涛</td><td>连林立<br>江泽<br>李文涛</td><td>李文涛</td><td>李文涛</td><td>李文涛</td></tr>

<tr class="h19"><td class="cn" colspan="2"><div>慢病门诊<br>223</div></td><td></td><td></td><td></td><td></td><td></td><td></td><td></td><td></td><td></td><td></td><td>陈永生</td><td>陈永生</td><td></td><td></td></tr>
<tr class="h13"><td class="cn" colspan="2"><div>药学门诊</div></td><td>谢古芳</td><td></td><td></td><td></td><td>赵峻</td><td>滕青华</td><td>崔永霞</td><td>冯慧慧</td><td>张博</td><td>宋玮娟</td><td>徐帅民</td><td>徐燕</td><td>管海波</td><td>李军伟</td></tr>
</tbody>
</table>
<div class="note">备注：请以当日坐诊医师为准！所有坐诊专家均可提前预约挂号。</div>
</body>
</html>
```

FILE: styles.css
```css
html, body {
  margin: 0;
  padding: 0;
  background: #ffffff;
}

body {
  width: 650px;
  font-family: "Noto Sans CJK SC", "Noto Sans", sans-serif;
  color: #555555;
}

.sch {
  width: 650px;
  border-collapse: collapse;
  table-layout: fixed;
}

.sch col.cg { width: 17px; }
.sch col.cc { width: 90px; }
.sch col.wa { background: #ccf6fc; }
.sch col.wp { background: #00c6f5; }
.sch col.dp { background: #99cbfc; }

.sch td {
  border: 1px solid #6a6f76;
  padding: 0;
  text-align: center;
  vertical-align: middle;
  font-size: 9.5px;
  line-height: 13px;
  white-space: nowrap;
}

/* row heights */
.h12 { height: 12px; }
.h13 { height: 13px; }
.h14 { height: 14px; }
.h15 { height: 15px; }
.h16 { height: 16px; }
.h17 { height: 17px; }
.h18 { height: 18px; }
.h19 { height: 19px; }
.h20 { height: 20px; }
.h21 { height: 21px; }
.h25 { height: 25px; }
.h26 { height: 26px; }
.h27 { height: 27px; }
.h28 { height: 28px; }
.h33 { height: 33px; }
.h38 { height: 38px; }
.h40 { height: 40px; }
.h41 { height: 41px; }
.h42 { height: 42px; }
.h45 { height: 45px; }
.h46 { height: 46px; }
.h53 { height: 53px; }
.h66 { height: 66px; }
.h86 { height: 86px; }
.h133 { height: 133px; }

.h13 td, .h14 td, .h15 td { line-height: 12px; }
.h12 td { line-height: 11px; }

/* multi-line name rows */
.ml td { vertical-align: top; line-height: 12.3px; }
.l12 td { line-height: 12px; }
.l13 td { line-height: 13px; }
.l14 td { line-height: 14px; padding-top: 2px; }
.l15 td { line-height: 14.2px; padding-top: 2px; }

/* clinic name cells */
.sch td.cn {
  font-size: 8px;
  line-height: 8.5px;
  vertical-align: middle;
  padding: 0;
  color: #555555;
}
.ml td.cn { line-height: 11.5px; }
.h17 td.cn { line-height: 8px; }
.h12 td.cn { line-height: 10px; }
.sch td.cb {
  font-size: 7px;
  font-weight: bold;
  color: #2a2a2a;
}

/* department group column */
.sch td.g {
  font-size: 9px;
  line-height: 10.5px;
  white-space: normal;
  word-break: break-all;
  vertical-align: middle;
  padding: 0 2px;
  color: #555555;
}
.sch td.gl { line-height: 13px; }
.sch td.gs {
  font-size: 6px;
  line-height: 7.5px;
  font-weight: bold;
  padding: 0;
  color: #222222;
}

/* header */
.sch td.title {
  background: #ffffff;
  font-size: 10.5px;
  font-weight: bold;
  line-height: 16px;
  color: #111111;
  letter-spacing: 0.3px;
}
.dh td {
  background: #ffffff;
  font-size: 8.5px;
  font-weight: bold;
  line-height: 12px;
  color: #2a2a2a;
}
.sch td.ks {
  background: #ffffff;
  font-size: 10px;
  font-weight: bold;
  color: #2a2a2a;
}
.ap td {
  font-size: 8.5px;
  color: #333333;
}
.wh td {
  font-size: 8.5px;
  font-weight: bold;
  color: #2a2a2a;
}

.note {
  height: 19px;
  line-height: 19px;
  padding-left: 86px;
  text-align: center;
  font-size: 11.5px;
  font-weight: bold;
  color: #222222;
  white-space: nowrap;
}
```
